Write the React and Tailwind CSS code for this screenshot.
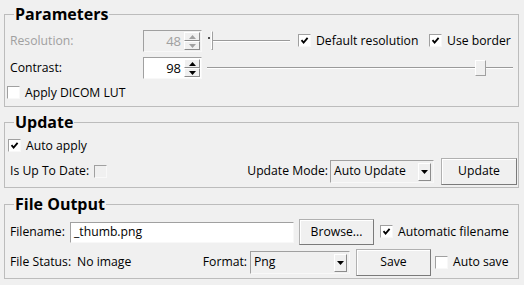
import React from 'react';

const sunken = 'border border-t-[#a0a0a0] border-l-[#a0a0a0] border-r-[#f8f8f8] border-b-[#f8f8f8]';
const raised = 'border border-t-white border-l-white border-r-[#8c8c8c] border-b-[#8c8c8c]';

function CheckBox({ checked, disabled }) {
    return (
        <span className={`w-[13px] h-[13px] shrink-0 flex items-center justify-center ${sunken} ${disabled ? 'bg-[#f0f0f0]' : 'bg-white'}`}>
            {checked && (
                <svg width="9" height="9" viewBox="0 0 9 9">
                    <path d="M1.5 4.2 L3.6 6.6 L7.6 1.8" fill="none" stroke="#000" strokeWidth="1.8" />
                </svg>
            )}
        </span>
    );
}

function Check({ label, checked, disabled, className = '' }) {
    return (
        <div className={`flex items-center ${className}`}>
            <CheckBox checked={checked} disabled={disabled} />
            <span className="ml-[5px] whitespace-nowrap">{label}</span>
        </div>
    );
}

function Arrow({ up, color }) {
    return (
        <svg width="7" height="4" viewBox="0 0 7 4">
            <path d={up ? 'M3.5 0 L7 4 L0 4Z' : 'M0 0 L7 0 L3.5 4Z'} fill={color} />
        </svg>
    );
}

function SpinBox({ value, disabled }) {
    const c = disabled ? '#a0a0a0' : '#000';
    return (
        <div className={`w-[59px] h-[22px] flex shrink-0 ${sunken} ${disabled ? 'bg-[#f0f0f0] text-[#a0a0a0]' : 'bg-white text-black'}`}>
            <span className="flex-1 text-right pr-[3px] text-[13px] leading-[20px]">{value}</span>
            <div className="w-[17px] flex flex-col py-[1px] pr-[1px]">
                <span className={`flex-1 flex items-center justify-center bg-[#f0f0f0] ${raised}`}>
                    <Arrow up color={c} />
                </span>
                <span className={`flex-1 flex items-center justify-center bg-[#f0f0f0] ${raised}`}>
                    <Arrow color={c} />
                </span>
            </div>
        </div>
    );
}

function Groove({ className = '' }) {
    return <span className={`h-[2px] bg-[#9a9a9a] border-b border-b-white ${className}`} />;
}

function Handle() {
    return <span className="w-[11px] h-[16px] shrink-0 bg-[#f0f0f0] border border-t-white border-l-white border-r-[#a0a0a0] border-b-[#a0a0a0]" />;
}

function Combo({ value, width }) {
    return (
        <div className={`${width} h-[23px] flex items-center shrink-0 bg-[#f0f0f0] ${sunken}`}>
            <span className="flex-1 pl-[3px] whitespace-nowrap">{value}</span>
            <span className={`w-[13px] h-[18px] mr-[2px] flex items-center justify-center bg-[#f0f0f0] ${raised}`}>
                <Arrow color="#000" />
            </span>
        </div>
    );
}

function Button({ label, width, height = 'h-[27px]', className = '' }) {
    return (
        <div className={`${width} ${height} shrink-0 flex items-center justify-center bg-[#f0f0f0] border border-[#b0b0b0] border-r-[#7a7a7a] border-b-[#7a7a7a] shadow-[inset_1px_1px_0_#fff] ${className}`}>
            {label}
        </div>
    );
}

function Group({ title, className = '', children }) {
    return (
        <fieldset className={`border border-[#bcbcbc] ml-[4px] w-[515px] pl-[5px] pr-[1px] ${className}`}>
            <legend className="ml-[4px] px-[1px] text-[16px] leading-[20px] font-bold">{title}</legend>
            {children}
        </fieldset>
    );
}

export default function App() {
    return (
        <div className="w-[524px] h-[285px] bg-[#f0f0f0] pt-[4px] font-['Open_Sans',sans-serif] text-[12.2px] text-black overflow-hidden">
            {/* Parameters */}
            <Group title="Parameters" className="pt-[6px] pb-[3px]">
                <div className="flex items-center h-[22px]">
                    <span className="w-[133px] text-[#a0a0a0]">Resolution:</span>
                    <SpinBox value="48" disabled />
                    <div className="w-[84px] ml-[4px] flex items-center">
                        <span className="w-[2px] h-[2px] bg-[#505050] ml-[2px] mb-[6px]" />
                        <span className="ml-[1px]"><Handle /></span>
                        <Groove className="flex-1" />
                    </div>
                    <Check label="Default resolution" checked className="ml-[8px] w-[131px]" />
                    <Check label="Use border" checked />
                </div>
                <div className="flex items-center h-[22px] mt-[5px]">
                    <span className="w-[133px]">Contrast:</span>
                    <SpinBox value="98" />
                    <div className="flex-1 ml-[5px] mr-[4px] flex items-center">
                        <Groove className="flex-1" />
                        <Handle />
                        <Groove className="w-[27px]" />
                    </div>
                </div>
                <div className="flex items-center h-[20px] mt-[4px] -ml-[3px]">
                    <Check label="Apply DICOM LUT" />
                </div>
            </Group>

            {/* Update */}
            <Group title="Update" className="mt-[5px] pt-[4px] pb-[2px]">
                <div className="flex items-center h-[20px] -ml-[2px]">
                    <Check label="Auto apply" checked />
                </div>
                <div className="flex items-center h-[27px] mt-[2px]">
                    <div className="w-[320px] flex items-center">
                        <span className="w-[84px]">Is Up To Date:</span>
                        <CheckBox disabled />
                        <span className="flex-1" />
                        <span className="pr-[2px]">Update Mode:</span>
                    </div>
                    <Combo value="Auto Update" width="w-[104px]" />
                    <Button label="Update" width="w-[76px]" className="ml-[7px]" />
                </div>
            </Group>

            {/* File Output */}
            <Group title="File Output" className="mt-[6px] pt-[5px] pb-[2px]">
                <div className="flex items-center h-[26px]">
                    <span className="w-[60px]">Filename:</span>
                    <div className={`w-[224px] h-[21px] flex items-center bg-white pl-[3px] ${sunken}`}>_thumb.png</div>
                    <Button label="Browse..." width="w-[75px]" height="h-[26px]" className="ml-[5px]" />
                    <Check label="Automatic filename" checked className="ml-[6px]" />
                </div>
                <div className="flex items-center h-[27px] mt-[4px]">
                    <div className="w-[240px] flex items-center">
                        <span className="w-[67px]">File Status:</span>
                        <span>No image</span>
                        <span className="flex-1" />
                        <span className="pr-[3px]">Format:</span>
                    </div>
                    <Combo value="Png" width="w-[100px]" />
                    <Button label="Save" width="w-[75px]" className="ml-[6px]" />
                    <Check label="Auto save" className="ml-[4px]" />
                </div>
            </Group>
        </div>
    );
}
